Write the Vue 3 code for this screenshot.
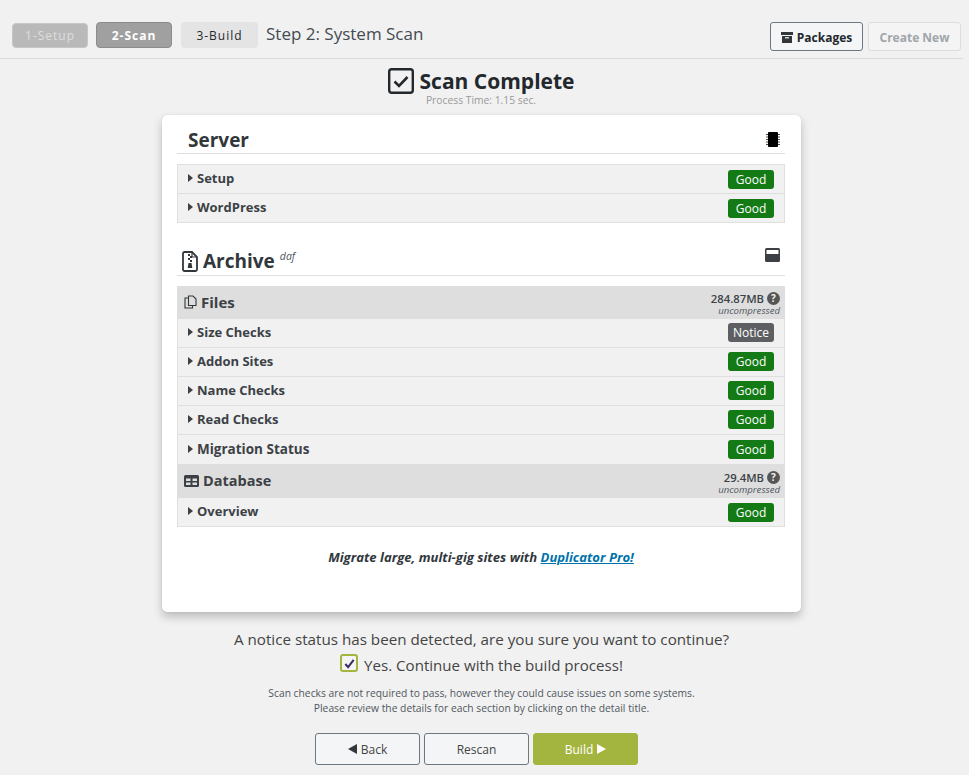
<script setup>
const filesRows = [
  { name: 'Size Checks', status: 'Notice' },
  { name: 'Addon Sites', status: 'Good' },
  { name: 'Name Checks', status: 'Good' },
  { name: 'Read Checks', status: 'Good' },
]
</script>

<template>
  <div class="page">
    <header class="top">
      <div class="wizard">
        <span class="step s1">1-Setup</span>
        <span class="step s2">2-Scan</span>
        <span class="step s3">3-Build</span>
        <span class="step-title">Step 2: System Scan</span>
      </div>
      <div class="top-actions">
        <button class="btn-packages">
          <svg class="pk-icon" viewBox="0 0 12 11"><path d="M0 0h12v3H0zM1 4h10v7H1z" fill="#32373c"/><rect x="4" y="5.2" width="4" height="1.2" fill="#f3f5f6"/></svg>
          Packages
        </button>
        <button class="btn-create">Create New</button>
      </div>
    </header>

    <div class="complete">
      <h2>
        <svg class="check-big" viewBox="0 0 26 26"><rect x="1.2" y="1.2" width="23.6" height="23.6" rx="2.5" fill="none" stroke="#23282d" stroke-width="2.4"/><path d="M6.5 13.5l4.5 4.5 8.5-9" fill="none" stroke="#23282d" stroke-width="2.6"/></svg>
        Scan Complete
      </h2>
      <div class="ptime">Process Time: 1.15 sec.</div>
    </div>

    <main class="card">
      <div class="sec-head server-head">
        <span class="sec-title">Server</span>
        <svg class="chip" viewBox="0 0 14 15">
          <rect x="2" y="0" width="10" height="15" rx="1" fill="#000"/>
          <path d="M0 2.500h2M0 5h2M0 7.500h2M0 10h2M0 12.500h2M12 2.500h2M12 5h2M12 7.500h2M12 10h2M12 12.500h2" stroke="#5a4a40" stroke-width="1"/>
        </svg>
      </div>
      <div class="box">
        <div class="row"><span class="rname"><i class="caret"></i>Setup</span><span class="badge good">Good</span></div>
        <div class="row"><span class="rname"><i class="caret"></i>WordPress</span><span class="badge good">Good</span></div>
      </div>

      <div class="sec-head archive-head">
        <span class="sec-title archive-title">
          <svg class="zip" viewBox="0 0 16 21"><path d="M1 2.500A1.500 1.500 0 0 1 2.500 1H10l5 5v12.500A1.500 1.500 0 0 1 13.500 20h-11A1.500 1.500 0 0 1 1 18.500z" fill="none" stroke="#32373c" stroke-width="1.800"/><path d="M10 1v5h5" fill="none" stroke="#32373c" stroke-width="1.200"/><path d="M6 3h2v2H6zM8 5h2v2H8zM6 7h2v2H6zM8 9h2v2H8z" fill="#32373c"/><path d="M6.500 12h3l.8 5H5.700z" fill="#32373c"/></svg>
          Archive<em class="daf">daf</em>
        </span>
        <svg class="drive" viewBox="0 0 15 14"><rect width="15" height="14" rx="1.500" fill="#3c3f43"/><rect x="1.500" y="2" width="12" height="4" fill="#fff"/></svg>
      </div>

      <div class="box">
        <div class="group files-group">
          <span class="gname">
            <svg class="copy" viewBox="0 0 13 14"><path d="M4.500 1h4.500l3 3v6.500h-7.500zM4.500 3H1v10h7.500v-2.500" fill="none" stroke="#32373c" stroke-width="1.100"/></svg>
            Files
          </span>
          <span class="gsize">
            <span class="gval">284.87MB <i class="help">?</i></span>
            <em>uncompressed</em>
          </span>
        </div>
        <div v-for="r in filesRows" :key="r.name" class="row files-row">
          <span class="rname"><i class="caret"></i>{{ r.name }}</span>
          <span class="badge" :class="r.status === 'Good' ? 'good' : 'notice'">{{ r.status }}</span>
        </div>
        <div class="row migration"><span class="rname rname-lg"><i class="caret"></i>Migration Status</span><span class="badge good">Good</span></div>
        <div class="group db-group">
          <span class="gname gname-db">
            <svg class="table" viewBox="0 0 15 12"><path fill-rule="evenodd" d="M1.500 0h12A1.500 1.500 0 0 1 15 1.500v9a1.500 1.500 0 0 1-1.500 1.500h-12A1.500 1.500 0 0 1 0 10.500v-9A1.500 1.500 0 0 1 1.500 0zM2 3.500v2.500h4.500V3.500zm6.500 0v2.500H13V3.500zM2 7.500v2.500h4.500V7.500zm6.500 0v2.500H13V7.500z" fill="#3c3f43"/></svg>
            Database
          </span>
          <span class="gsize">
            <span class="gval">29.4MB <i class="help">?</i></span>
            <em>uncompressed</em>
          </span>
        </div>
        <div class="row overview"><span class="rname"><i class="caret"></i>Overview</span><span class="badge good">Good</span></div>
      </div>

      <p class="promo">Migrate large, multi-gig sites with <a href="#">Duplicator Pro!</a></p>
    </main>

    <section class="confirm">
      <p class="notice-line">A notice status has been detected, are you sure you want to continue?</p>
      <label class="yes">
        <span class="cb"><svg viewBox="0 0 14 14"><path d="M2.500 7.500l3 3.500 6-8" fill="none" stroke="#3f2b63" stroke-width="2.200"/></svg></span>
        Yes. Continue with the build process!
      </label>
      <p class="fine">Scan checks are not required to pass, however they could cause issues on some systems.<br>Please review the details for each section by clicking on the detail title.</p>
    </section>

    <footer class="actions">
      <button class="act"><i class="tri-l"></i>Back</button>
      <button class="act">Rescan</button>
      <button class="act build">Build<i class="tri-r"></i></button>
    </footer>
  </div>
</template>

<style>
html, body { margin: 0; background: #f1f1f1; }
</style>

<style scoped>
.page {
  width: 969px;
  height: 775px;
  overflow: hidden;
  background: #f1f1f1;
  font-family: "Open Sans", "Noto Sans", sans-serif;
  color: #32373c;
}
.top {
  box-sizing: border-box;
  width: 963px;
  height: 59px;
  border-bottom: 1px solid #dcdcdc;
  display: flex;
  justify-content: space-between;
  padding: 22px 2px 0 12px;
}
.wizard { display: flex; align-items: flex-start; }
.step {
  box-sizing: border-box;
  width: 76px;
  height: 26px;
  border-radius: 4px;
  margin-right: 9px;
  display: flex;
  align-items: center;
  justify-content: center;
  font-size: 12px;
  letter-spacing: 1px;
}
.s1 { background: #b9b9b9; color: #dedede; height: 25px; margin-top: 1px; width: 76px; margin-right: 8px; border: 1px solid #c6c6c6; }
.s2 { background: #a0a0a0; color: #fff; font-weight: 700; border: 1px solid #8c8c8c; }
.s3 { background: #e4e4e4; color: #23282d; width: 77px; margin-right: 8px; }
.step-title { font-size: 17px; line-height: 24px; color: #444b52; font-weight: 400; }
.top-actions { display: flex; gap: 5px; }
.top-actions button {
  box-sizing: border-box;
  height: 29px;
  width: 93px;
  border-radius: 3px;
  font-family: inherit;
  font-size: 12px;
  font-weight: 700;
  display: flex;
  align-items: center;
  justify-content: center;
  padding: 1px 0 0;
}
.btn-packages { background: #f3f5f6; border: 1px solid #6c7781; color: #23282d; gap: 4px; }
.pk-icon { width: 12px; height: 11px; }
.btn-create { background: #f4f4f4; border: 1px solid #ddd; color: #a0a5aa; }
.complete { text-align: center; height: 48px; margin-top: 8px; padding-right: 7px; box-sizing: border-box; width: 969px; }
.complete h2 {
  margin: 0;
  height: 28px;
  display: flex;
  align-items: center;
  justify-content: center;
  gap: 6px;
  font-size: 21px;
  line-height: 28px;
  font-weight: 700;
  color: #23282d;
}
.check-big { width: 26px; height: 26px; }
.ptime { font-size: 10.300px; line-height: 12px; color: #999; margin-top: -1px; }
.card {
  box-sizing: border-box;
  width: 639px;
  height: 497px;
  margin-left: 162px;
  background: #fff;
  border-radius: 5px;
  box-shadow: 0 5px 10px rgba(0,0,0,.22), 0 0 1px rgba(0,0,0,.2);
  padding: 0 16px 0 15px;
}
.sec-head {
  display: flex;
  justify-content: space-between;
  border-bottom: 1px solid #dfdfdf;
  box-sizing: border-box;
}
.server-head { height: 39px; margin-bottom: 10px; padding: 11px 5px 0 11px; }
.archive-head { height: 53px; margin: 0 0 10px; padding: 25px 5px 0 5px; }
.sec-title { font-size: 19px; line-height: 28px; font-weight: 700; color: #32373c; }
.archive-title { display: flex; align-items: center; font-size: 19px; line-height: 28px; height: 26px; }
.chip { width: 14px; height: 15px; margin-top: 6px; }
.drive { width: 15px; height: 14px; }
.zip { width: 16px; height: 21px; margin-right: 5px; }
.daf { font-size: 10.500px; font-weight: 400; margin: -10px 0 0 5px; color: #50575e; }
.box { border: 1px solid #dfdfdf; background: #f1f1f1; }
.row {
  height: 28px;
  display: flex;
  align-items: center;
  justify-content: space-between;
  padding: 0 10px;
  border-bottom: 1px solid #dfdfdf;
}
.row:last-child { border-bottom: 0; }
.rname { font-size: 13px; font-weight: 700; display: flex; align-items: center; color: #3c4146; padding-bottom: 2px; }
.rname-lg { font-size: 13.500px; }
.files-row .badge { margin-bottom: 2px; }
.migration { height: 29px; border-top: 1px solid #dfdfdf; border-bottom: 0; margin-top: -1px; }
.caret {
  width: 0; height: 0;
  border-left: 5px solid #3c4146;
  border-top: 4.500px solid transparent;
  border-bottom: 4.500px solid transparent;
  margin-right: 4px;
}
.badge {
  width: 46px;
  height: 19px;
  border-radius: 3px;
  color: #fff;
  font-size: 12px;
  line-height: 19px;
  text-align: center;
}
.good { background: #137a16; }
.notice { background: #5d5f63; }
.group {
  background: #dedede;
  display: flex;
  align-items: center;
  justify-content: space-between;
  padding: 0 4px 0 6px;
  box-sizing: border-box;
}
.files-group { height: 33px; margin: -1px -1px 0; border-radius: 4px 4px 0 0; padding: 0 5px 0 7px; }
.db-group { height: 34px; }
.gname { font-size: 15px; font-weight: 700; display: flex; align-items: center; gap: 4px; color: #3c4146; padding-bottom: 1px; }
.gname-db { font-size: 14.500px; }
.copy { width: 13px; height: 14px; }
.table { width: 15px; height: 12px; }
.gsize { display: flex; flex-direction: column; align-items: flex-end; font-size: 11.300px; line-height: 13px; padding-top: 3px; }
.gval { font-weight: 600; display: flex; align-items: center; gap: 3px; color: #3c4146; }
.gsize em { font-size: 9.600px; line-height: 11px; color: #50575e; }
.help {
  display: inline-block;
  width: 13px;
  height: 13px;
  border-radius: 50%;
  background: #555;
  color: #f1f1f1;
  font-size: 10px;
  line-height: 13px;
  font-style: normal;
  font-weight: 700;
  text-align: center;
}
.promo {
  margin: 21px 0 0;
  text-align: center;
  font-size: 13.100px;
  line-height: 18px;
  font-weight: 700;
  font-style: italic;
  color: #32373c;
}
.promo a { color: #0073aa; text-decoration: underline; }
.confirm { text-align: center; width: 963px; }
.notice-line { margin: 17px 0 0; font-size: 15.200px; line-height: 20px; color: #444; }
.yes { display: flex; align-items: center; justify-content: center; gap: 6px; margin-top: 6px; height: 20px; font-size: 15.100px; color: #444; }
.cb {
  box-sizing: border-box;
  width: 18px;
  height: 18px;
  border: 2px solid #a4b53f;
  border-radius: 3px;
  background: #f4f4f4;
  display: flex;
  align-items: center;
  justify-content: center;
  margin-top: -4px;
}
.cb svg { width: 13px; height: 13px; }
.fine { margin: 11px 0 0; font-size: 10.300px; line-height: 15px; color: #50575e; }
.actions {
  display: flex;
  gap: 4px;
  margin-top: 17px;
  padding-left: 315px;
}
.act {
  box-sizing: border-box;
  width: 105px;
  height: 32px;
  border-radius: 3px;
  border: 1px solid #6c7781;
  background: #f3f5f6;
  color: #444;
  font-family: inherit;
  font-size: 12px;
  display: flex;
  align-items: center;
  justify-content: center;
  padding: 0;
}
.build { background: #a4b53f; border-color: #a4b53f; color: #fff; }
.tri-l {
  width: 0; height: 0;
  border-right: 9px solid #32373c;
  border-top: 5px solid transparent;
  border-bottom: 5px solid transparent;
  margin-right: 4px;
}
.tri-r {
  width: 0; height: 0;
  border-left: 9px solid #fff;
  border-top: 5px solid transparent;
  border-bottom: 5px solid transparent;
  margin-left: 4px;
}
</style>
